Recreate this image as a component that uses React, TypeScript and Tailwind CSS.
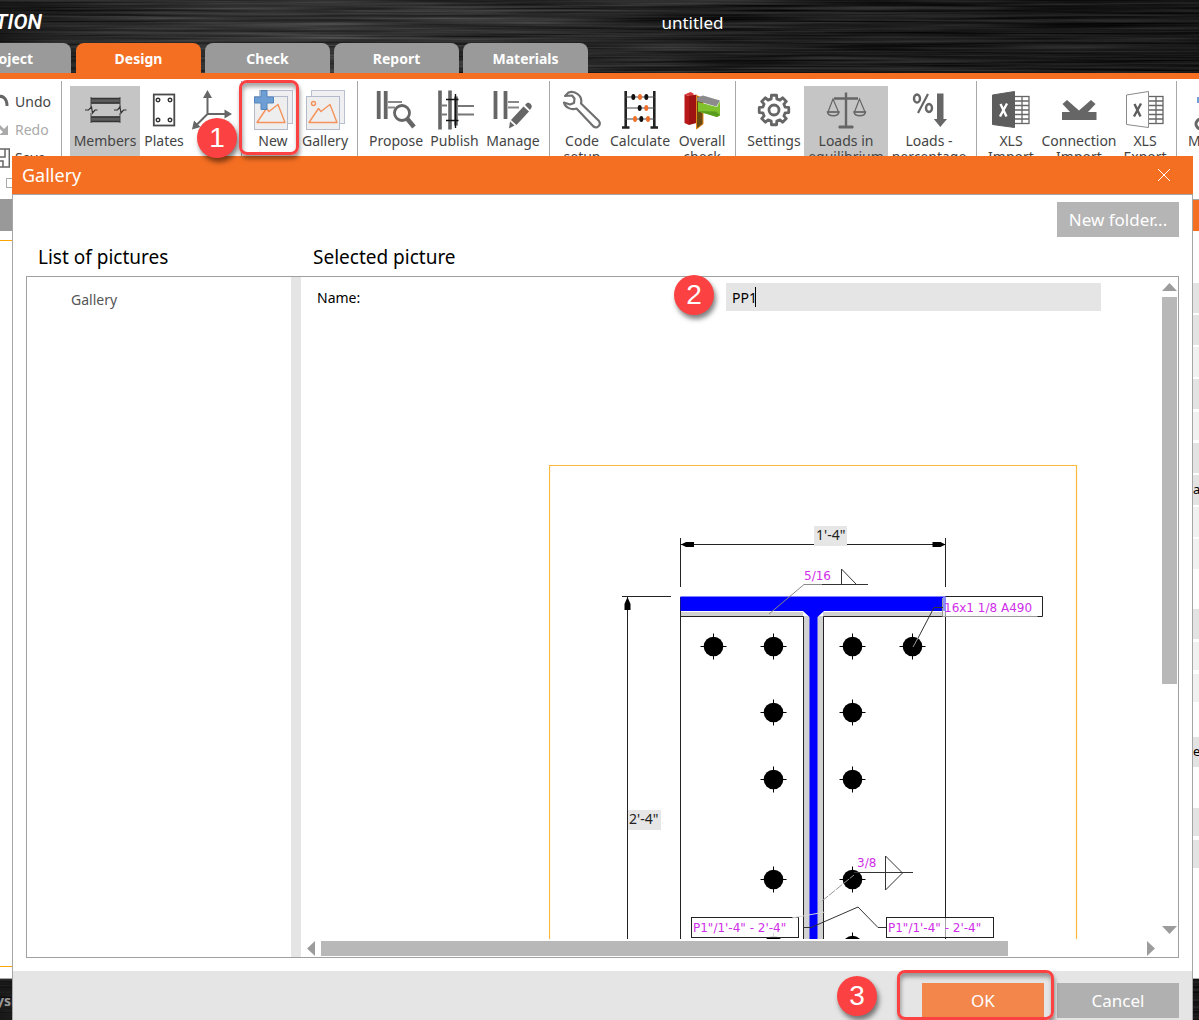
import React from "react";

const INK = "#666666";

function BrushedMetal({ id }: { id: string }) {
  return (
    <svg className="absolute inset-0 h-full w-full" aria-hidden="true">
      <defs>
        <filter id={id} x="0" y="0" width="100%" height="100%" colorInterpolationFilters="sRGB">
          <feTurbulence type="fractalNoise" baseFrequency="0.005 0.4" numOctaves="3" seed="4" />
          <feColorMatrix values="0.34 0 0 0 -0.04  0.34 0 0 0 -0.04  0.34 0 0 0 -0.04  0 0 0 0 1" />
        </filter>
        <linearGradient id={id + "-shine"}>
          <stop offset="0" stopColor="#000" stopOpacity="0.25" />
          <stop offset="0.33" stopColor="#fff" stopOpacity="0.07" />
          <stop offset="0.6" stopColor="#000" stopOpacity="0.1" />
          <stop offset="1" stopColor="#000" stopOpacity="0.3" />
        </linearGradient>
      </defs>
      <rect width="100%" height="100%" filter={`url(#${id})`} />
      <rect width="100%" height="100%" fill={`url(#${id}-shine)`} />
    </svg>
  );
}

function Icon({ x, children }: { x: number; children?: React.ReactNode }) {
  return (
    <svg className="h-11 w-11 shrink-0" viewBox={`${x} 86 44 44`} fill="none" aria-hidden="true">
      {children}
    </svg>
  );
}

const MembersIcon = () => (
  <Icon x={83}>
    <rect x="91" y="98" width="29" height="5.500" fill="#5c5c5c" />
    <rect x="91" y="116.500" width="29" height="5.500" fill="#5c5c5c" />
    <path d="M91 98.500h29M91 103h29M91 117h29M91 121.500h29" stroke="#333" strokeWidth="1.400" />
    <path d="M91 97v10M91 113v10M120 97v10M120 113v10" stroke="#444" />
    <path d="M85 110h3.500l3-3 1 6 2.500-3h2.500M114 110h3.500l2.500-3 1 6 2.500-3h3" stroke="#333" strokeWidth="1.200" />
  </Icon>
);

const PlatesIcon = () => (
  <Icon x={142}>
    <rect x="153.800" y="94.500" width="20.500" height="31" stroke="#4a4a4a" strokeWidth="1.800" />
    {[[158, 100], [170, 100], [158, 120], [170, 120]].map(([cx, cy]) => (
      <circle key={`${cx}-${cy}`} cx={cx} cy={cy} r="1.800" stroke="#333" strokeWidth="1.400" />
    ))}
  </Icon>
);

const AxesIcon = () => (
  <Icon x={190}>
    <path d="M207.500 96v18H227M207.500 114l-12 12" stroke={INK} strokeWidth="2" />
    <path d="M207.500 90l4.500 8h-9zM232 114l-7.500 4.500v-9zM192 129.500l2-9 6.500 6.500z" fill={INK} />
  </Icon>
);

const PictureIcon = ({ plus }: { plus?: boolean }) => (
  <Icon x={251}>
    <rect x="259.500" y="90.500" width="33" height="33" fill="#f0f0f2" stroke="#b9c0d0" />
    <rect x="254.500" y="96.500" width="33" height="33" fill="#eeeeef" stroke="#b3bacb" />
    <path d="M257 122.500l9.500-14 2.500 3 9-7 7 18z" stroke="#f5925a" strokeWidth="1.400" strokeLinejoin="round" />
    {plus ? (
      <path d="M261 90.500h6v6.500h6.500v6H267v6.500h-6V103h-6.500v-6h6.500z" fill="#6d9fd4" stroke="#5585bd" />
    ) : (
      <circle cx="261.500" cy="103.500" r="2" stroke="#f5925a" strokeWidth="1.400" />
    )}
  </Icon>
);

const ProposeIcon = () => (
  <Icon x={374}>
    <path d="M378.700 91v28M385.700 91v28" stroke={INK} strokeWidth="3.800" />
    <path d="M388 102h14M388 107.500h7" stroke="#888" strokeWidth="2" />
    <circle cx="402" cy="113" r="7.500" stroke={INK} strokeWidth="2.800" />
    <path d="M407 118.500l7 8.500" stroke={INK} strokeWidth="4.500" />
  </Icon>
);

const PublishIcon = () => (
  <Icon x={433}>
    <path d="M440 90.500v39M450 90.500v39M456 96.500v29" stroke={INK} strokeWidth="3.600" />
    <path d="M458 106h16M458 114.500h16M442 105.500h5M442 114.500h5" stroke="#777" strokeWidth="2" />
    <path d="M446 99.500h12.500M446 120.500h12.500M455.500 94v34" stroke="#111" strokeWidth="1.400" />
  </Icon>
);

const ManageIcon = () => (
  <Icon x={491}>
    <path d="M495.500 91v28M505.500 91v28" stroke={INK} strokeWidth="3.800" />
    <path d="M508 102h11M508 107.500h11" stroke="#888" strokeWidth="2" />
    <path d="M525 105l2-2c2-1.500 6 2 4.500 4.500l-1.500 2.500zM523.500 106.500l5.500 5-12.500 13.500-5.500-5zM510 121.500l4.500 4-5.500 3z" fill={INK} />
  </Icon>
);

const WrenchIcon = () => (
  <Icon x={560}>
    <path
      d="M568.500 92.500C575 90 583 96 581 103.500L599 121c2.500 4-2 8-5.500 5.500L576.500 108.500c-5 2-11.500-1-12.500-6l6 2 4-1.500.500-4.500-2.500-3-7 .500z"
      fill="#fff"
      stroke="#707070"
      strokeWidth="2.200"
      strokeLinejoin="round"
    />
  </Icon>
);

const AbacusIcon = () => (
  <Icon x={618}>
    <path d="M625.700 91v36M654.300 91v36" stroke="#222" strokeWidth="2.600" />
    <path d="M622 127.500h7.500M650.500 127.500h7.500" stroke="#222" strokeWidth="2.400" />
    <path d="M625 97h30M625 108h30M625 119h30" stroke="#444" strokeWidth="1.200" />
    {[[633.300, 97, 0], [640, 97, 1], [646.300, 97, 0], [639.700, 108, 0], [646.300, 108, 1], [635, 119, 1], [641.300, 119, 0], [648, 119, 1]].map(([cx, cy, hot]) => (
      <ellipse key={`${cx}-${cy}`} cx={cx} cy={cy} rx="2" ry="3" fill={hot ? "#f0702a" : "#111"} />
    ))}
  </Icon>
);

const OverallIcon = () => (
  <Icon x={680}>
    <path d="M684.500 94.500l4.500 1.500v29l-4.500-2z" fill="#b81818" />
    <path d="M684.500 94.500l6-2.500 3 1.500v3.500l-4.500-1z" fill="#d83a3a" />
    <path d="M689 96l7.500-1.500V123l-7.500 2z" fill="#9e1212" />
    <path d="M696.500 95.500l6.500 3v25.500l-6.500 5z" fill="#6b4a12" stroke="#e28a1a" />
    <path d="M698 102l19 5 3-6v14.500l-3 1.500-19-5.500z" fill="#7fc22e" />
    <path d="M698 111l18 .500 4 3.500-3 2z" fill="#5a9c1c" />
    <path d="M697 97.500l6-2 17 5-3.500 6L697 101z" fill="#8b8b8b" />
  </Icon>
);

const gearOutline = Array.from({ length: 8 }, (_, tooth) =>
  [[-14, 11.5], [-10, 15], [10, 15], [14, 11.5]]
    .map(([offset, r]) => {
      const a = ((tooth * 45 + offset) * Math.PI) / 180;
      return `${(773 + r * Math.sin(a)).toFixed(2)},${(110 - r * Math.cos(a)).toFixed(2)}`;
    })
    .join(" "),
).join(" ");

const GearIcon = () => (
  <Icon x={751}>
    <polygon points={gearOutline} stroke={INK} strokeWidth="2.800" strokeLinejoin="round" />
    <circle cx="773" cy="110" r="5" stroke={INK} strokeWidth="2.800" />
  </Icon>
);

const ScalesIcon = () => (
  <Icon x={824}>
    <path d="M846 92.500V126M834 98.500h24" stroke={INK} strokeWidth="2.400" />
    <path d="M839 128v-2h14v2z" fill={INK} stroke={INK} />
    <path d="M833 99l-5 13h10.500zM859.500 99l-5 13H865z" stroke={INK} strokeWidth="1.200" />
    <path d="M827.500 112h11.500c-1 5-10.500 5-11.500 0zM854 112h11.500c-1 5-10.500 5-11.500 0z" stroke={INK} strokeWidth="1.400" />
  </Icon>
);

const PercentIcon = () => (
  <Icon x={907}>
    <ellipse cx="917" cy="98.500" rx="3" ry="4" stroke={INK} strokeWidth="2.400" />
    <ellipse cx="929" cy="108" rx="3" ry="4" stroke={INK} strokeWidth="2.400" />
    <path d="M928 94l-10 19" stroke={INK} strokeWidth="2.200" />
    <path d="M937 93.500h6.500V119h3.500L940.300 127l-6.500-8h3.200z" fill={INK} />
  </Icon>
);

const SheetIcon = ({ solid }: { solid?: boolean }) => (
  <Icon x={988}>
    <rect x="1013" y="96.500" width="15" height="27" fill="#fff" stroke={INK} strokeWidth="1.300" />
    <path d="M1013 101h15M1013 105.500h15M1013 110h15M1013 114.500h15M1013 119h15M1021 96v27.500" stroke={INK} strokeWidth="1.300" />
    <path d="M991.500 95l22-3.500v36l-22-3z" fill={solid ? "#5d5d5d" : "#fff"} stroke={solid ? "#5d5d5d" : "#8a8a8a"} />
    <path d="M999.500 104l6 12.500M1006 103.500l-7 13" stroke={solid ? "#fff" : "#5d5d5d"} strokeWidth="2.400" />
  </Icon>
);

const ConnectionIcon = () => (
  <Icon x={1057}>
    <path d="M1062 112h8l-7.500-8 4.500-4 12 10.500L1091 100l4.500 4-7.500 8h8.500v8h-34.500z" fill={INK} />
  </Icon>
);

const MemberAddIcon = () => (
  <Icon x={1194}>
    <path d="M1197 97h10v6h-10z" fill="#6d9fd4" />
    <path d="M1204 120a5 5 0 100 8" stroke={INK} strokeWidth="3" />
  </Icon>
);

function Tool({ icon, label, name, className, children }: { icon: React.ReactNode; label?: string; name?: string; className: string; children?: React.ReactNode }) {
  return (
    <div className={`relative shrink-0 ${className}`}>
      <button type="button" aria-label={name} className="flex h-full w-full flex-col items-center">
        {icon}
        {label && <span className="mt-[3px] block text-center text-sm leading-4 text-[#444]">{label}</span>}
      </button>
      {children}
    </div>
  );
}

function Group({ children, className }: { children: React.ReactNode; className: string }) {
  return <div className={`flex shrink-0 border-r border-[#a8a8a8] pt-[5px] ${className}`}>{children}</div>;
}

function Badge({ n, className }: { n: number; className: string }) {
  return (
    <span
      className={`absolute z-20 flex size-10 items-center justify-center rounded-full bg-[#fc4142] font-['Liberation_Sans'] text-[28px] leading-none text-white shadow-[2px_4px_5px_rgba(0,0,0,0.5)] ${className}`}
    >
      {n}
    </span>
  );
}

const frame =
  "pointer-events-none absolute z-20 rounded-lg border-[3px] border-[#fc4142] shadow-[1px_4px_4px_rgba(0,0,0,0.4),inset_1px_4px_4px_rgba(0,0,0,0.35)]";

const tabs = ["Project", "Design", "Check", "Report", "Materials"];

const propertyRows = [
  "mt-[52px] h-[30px] bg-[#e3e3e3]",
  "mt-0.5 h-[30px] bg-[#e3e3e3]",
  "mt-0.5 h-[30px] bg-[#f1f1f1]",
  "mt-0.5 h-[30px] bg-[#e3e3e3]",
  "mt-[3px] h-7 bg-[#f1f1f1]",
  "mt-[3px] h-[30px] bg-[#e3e3e3]",
  "mt-0.5 h-[30px] bg-[#e3e3e3]",
  "mt-0.5 h-[30px] bg-[#f1f1f1]",
  "mt-0.5 h-[30px] bg-[#f1f1f1]",
  "mt-10 h-[30px] bg-[#e3e3e3]",
  "mt-[3px] h-7 bg-[#f1f1f1]",
  "mt-1 h-7 bg-[#f1f1f1]",
  "mt-[35px] h-[30px] bg-[#e3e3e3]",
  "mt-[41px] h-7 bg-[#e3e3e3]",
  "mt-1 h-7 bg-[#e3e3e3]",
];
const rowText: Record<number, string> = { 6: "a", 12: "ea" };

function Bolt({ x, y }: { x: number; y: number }) {
  return (
    <g>
      <circle cx={x} cy={y} r="9.800" fill="#000" />
      <path d={`M${x - 13} ${y}h26M${x} ${y - 13}v26`} stroke="#000" />
    </g>
  );
}

const bolts = [[713.500, 646.500], [773.500, 646.500], [852.500, 646.500], [912.500, 646.500], [773.500, 712.500], [852.500, 712.500], [773.500, 779.500], [852.500, 779.500], [773.500, 879.500], [852.500, 879.500], [773.500, 945.500], [852.500, 945.500]];

function PlateDrawing() {
  return (
    <svg className="h-[474px] w-[529px] shrink-0" viewBox="549 465 529 474" fill="none" fontFamily="'DejaVu Sans', sans-serif" fontSize="12" role="img" aria-label="Plate drawing">
      <path d="M549.500 940V465.500h527V940" stroke="#fdb93e" strokeWidth="1.200" />
      <path d="M681 612h122v5H681zM823 612h122v5H823zM803 616h7v324h-7zM817 616h7v324h-7z" fill="#d2d2d2" />
      <path d="M680.500 597v343M945.500 597v343M680 616.500h123.500V940M946 616.500H823.500V940" stroke="#222" />
      <path d="M680.500 596.500H946v14.500H824l-6.500 6v323h-8V617l-6.500-6H680.500z" fill="#0000ff" />
      <path d="M680.500 538v49M945.500 538v49M681 544.500h264M622 596.500h49M627.500 597v343" stroke="#222" />
      <path d="M681 544.500l5-2.500h8v5h-8zM945.500 544.500l-5-2.500h-8v5h8zM627.500 597l-3 7v6h6v-6z" fill="#000" />
      {bolts.map(([x, y]) => (
        <Bolt key={`${x}-${y}`} x={x} y={y} />
      ))}
      <rect x="814" y="526" width="33" height="20" fill="#e6e6e6" />
      <text x="816" y="540" fill="#222" fontSize="14" fontFamily="'Noto Sans', sans-serif">1'-4"</text>
      <rect x="628" y="810" width="33" height="20" fill="#e6e6e6" />
      <text x="629" y="824" fill="#222" fontSize="14" fontFamily="'Noto Sans', sans-serif">2'-4"</text>

      <path d="M769 614l35-29.500h26" stroke="#888" />
      <path d="M822 584.500h46M841.500 584.500V569l15 15.500" stroke="#333" />
      <text x="804" y="580" fill="#cf2ee8">5/16</text>

      <rect x="943" y="597" width="100" height="20" fill="#fff" fillOpacity="0.550" />
      <path d="M945.500 596.500h97v20h-6" stroke="#222" />
      <path d="M942.500 598v18.500h95" stroke="#999" />
      <path d="M943 607.500h-9L917 640" stroke="#333" />
      <path d="M918 638l-5 9" stroke="#999" />
      <text x="944" y="612" fill="#cf2ee8">16x1 1/8 A490</text>

      <path d="M822 901l32-26" stroke="#999" strokeDasharray="8 1" />
      <path d="M854 872.500h59M885.500 856v34l17-17z" stroke="#333" />
      <text x="857" y="867" fill="#cf2ee8">3/8</text>

      <rect x="691.500" y="917.500" width="107" height="20" fill="#fff" fillOpacity="0.850" stroke="#222" />
      <rect x="886.500" y="917.500" width="107" height="20" fill="#fff" fillOpacity="0.600" stroke="#222" />
      <path d="M803 927.500h8l47-20.500 20 20.500h8" stroke="#333" />
      <path d="M792 918l33-6" stroke="#d8d8d8" />
      <text x="693" y="932" fill="#cf2ee8">P1"/1'-4" - 2'-4"</text>
      <text x="888" y="932" fill="#cf2ee8">P1"/1'-4" - 2'-4"</text>
    </svg>
  );
}

function GalleryDialog() {
  return (
    <section role="dialog" aria-label="Gallery" className="absolute bottom-0 left-3 right-1.5 top-[156px] z-10 flex flex-col bg-white">
      <header className="flex h-[38px] shrink-0 items-center justify-between bg-[#f56f23] pl-2.5 pr-[22px] text-white">
        <h1 className="text-lg">Gallery</h1>
        <button type="button" aria-label="Close">
          <svg width="14" height="14" viewBox="0 0 14 14" stroke="#fff" aria-hidden="true">
            <path d="M1 1l12 12M13 1L1 13" />
          </svg>
        </button>
      </header>
      <div className="flex min-h-0 flex-1 flex-col border-x border-t border-[#a6a6a6]">
        <div className="flex justify-end px-[13px] pt-[7px]">
          <button type="button" className="h-[35px] w-[122px] bg-[#b5b5b5] text-[17px] text-white">
            New folder...
          </button>
        </div>
        <div className="grid h-[39px] grid-cols-[275px_1fr] items-center px-[13px] pt-0.5 text-[19px] text-black">
          <h2 className="pl-3">List of pictures</h2>
          <h2 className="pl-3">Selected picture</h2>
        </div>
        <div className="mx-[13px] flex min-h-0 flex-1 border border-[#a0a0a0]">
          <nav className="w-[264px] shrink-0 pl-11 pt-2.5">
            <button type="button" className="text-sm leading-[22px] text-[#555]">Gallery</button>
          </nav>
          <div className="w-2.5 shrink-0 bg-[#e5e5e5]" />
          <div className="flex min-w-0 flex-1 flex-col">
            <div className="flex min-h-0 flex-1">
              <div className="flex min-w-0 flex-1 flex-col pt-1.5">
                <div className="grid shrink-0 grid-cols-[425fr_375fr] items-center pr-[61px]">
                  <label htmlFor="picture-name" className="pl-4 pt-0.5 text-sm text-black">Name:</label>
                  <div className="relative flex h-7 items-center bg-[#e5e5e5] pl-1.5">
                    <input id="picture-name" defaultValue="PP1" className="w-[23px] bg-transparent pt-0.5 text-sm text-black outline-none" />
                    <span className="h-5 w-px bg-black" />
                    <Badge n={2} className="-left-[52px] -top-2" />
                  </div>
                </div>
                <div className="mt-[154px] flex min-h-0 flex-1 overflow-hidden pl-[248px]">
                  <PlateDrawing />
                </div>
              </div>
              <div className="mr-px flex w-[15px] shrink-0 flex-col items-center pt-1.5">
                <svg width="15" height="8" aria-hidden="true"><path d="M0 8L7.500 0 15 8z" fill="#9c9c9c" /></svg>
                <div className="mt-1.5 h-[387px] w-full shrink-0 bg-[#b8b8b8]" />
                <svg className="mt-auto mb-[5px]" width="15" height="8" aria-hidden="true"><path d="M0 0h15L7.500 8z" fill="#9c9c9c" /></svg>
              </div>
            </div>
            <div className="mb-px mt-0.5 flex h-[15px] shrink-0 items-center pl-1.5 pr-[23px]">
              <svg width="8" height="15" aria-hidden="true"><path d="M8 0v15L0 7.500z" fill="#9c9c9c" /></svg>
              <div className="ml-1.5 mr-[139px] h-full flex-1 bg-[#b8b8b8]" />
              <svg width="8" height="15" aria-hidden="true"><path d="M0 0v15l8-7.500z" fill="#9c9c9c" /></svg>
            </div>
          </div>
        </div>
        <footer className="mt-[13px] flex h-[49px] shrink-0 justify-end gap-[13px] bg-[#e5e5e5] pr-[13px] pt-3 text-[17px] text-white">
          <div className="relative">
            <button type="button" className="h-[35px] w-[122px] bg-[#f3864b]">OK</button>
            <span className={`${frame} -left-[25px] -top-[13px] h-[50px] w-[157px]`} />
            <Badge n={3} className="-left-[85px] -top-[7px]" />
          </div>
          <button type="button" className="h-[35px] w-[122px] bg-[#b0b0b0]">Cancel</button>
        </footer>
      </div>
    </section>
  );
}

export default function App() {
  return (
    <div className="relative flex h-screen flex-col overflow-hidden bg-white font-['Noto_Sans',sans-serif]">
      <header className="relative h-[73px] shrink-0 bg-[#1e1e1e]">
        <BrushedMetal id="metal-top" />
        <div className="relative grid h-[43px] grid-cols-[1fr_auto_1fr] items-center pt-0.5 text-white">
          <span className="-ml-[5px] font-['Roboto'] text-[21px] font-semibold italic">TION</span>
          <span className="ml-[186px] text-[17px]">untitled</span>
        </div>
        <nav className="relative -ml-[54px] flex gap-1">
          {tabs.map((tab) => (
            <button
              key={tab}
              type="button"
              className={`h-[30px] w-[125px] rounded-t-lg pt-0.5 text-sm font-bold text-white ${tab === "Design" ? "ml-px bg-[#f56f23]" : "bg-[#9a9a9a]"}`}
            >
              {tab}
            </button>
          ))}
        </nav>
      </header>
      <div className="h-1.5 shrink-0 bg-[#f56f23]" />

      <div className="flex h-[120px] shrink-0 pt-0.5">
        <div className="flex w-[62px] shrink-0 flex-col border-r border-[#a8a8a8] pt-[7px] text-sm text-[#444]">
          <button type="button" className="flex h-7 items-center gap-1.5">
            <svg width="9" height="16" viewBox="0 0 9 16" fill="none" aria-hidden="true"><path d="M-4 4c6-4 11 0 11 8" stroke="#666" strokeWidth="3" /></svg>
            Undo
          </button>
          <button type="button" className="flex h-7 items-center gap-1.5 text-[#aaa]">
            <svg width="9" height="16" viewBox="0 0 9 16" aria-hidden="true"><path d="M0 3l4 4 4-4v10H-1l4-3-4-4z" fill="#aaa" /></svg>
            Redo
          </button>
          <button type="button" className="flex h-7 items-center gap-[5px]">
            <svg width="10" height="20" viewBox="0 0 10 20" fill="none" aria-hidden="true"><path d="M-4 1h13.300v18H-4M5 1v8H-4M3 19v-6H-4" stroke="#666" strokeWidth="1.500" /></svg>
            Save
          </button>
          <input type="checkbox" aria-label="Detail" className="ml-1.5 mt-1.5 size-2.5 appearance-none border border-[#aaa]" />
        </div>
        <Group className="pl-2 pr-[5px]">
          <Tool icon={<MembersIcon />} label="Members" className="w-[70px] bg-[#c5c5c5]" />
          <Tool icon={<PlatesIcon />} label="Plates" className="w-12" />
          <Tool icon={<AxesIcon />} name="Axes" className="w-12">
            <Badge n={1} className="left-[9px] top-8" />
          </Tool>
        </Group>
        <Group className="pl-[5px] pr-1.5">
          <Tool icon={<PictureIcon plus />} label="New" className="w-[52px]">
            <span className={`${frame} -left-2 -top-1.5 h-[75px] w-[60px]`} />
          </Tool>
          <Tool icon={<PictureIcon />} label="Gallery" className="w-[52px]" />
        </Group>
        <Group className="pl-2 pr-1.5">
          <Tool icon={<ProposeIcon />} label="Propose" className="w-[60px]" />
          <Tool icon={<PublishIcon />} label="Publish" className="w-[57px]" />
          <Tool icon={<ManageIcon />} label="Manage" className="w-[60px]" />
        </Group>
        <Group className="pl-2 pr-[5px]">
          <Tool icon={<WrenchIcon />} label="Code setup" className="w-12" />
          <Tool icon={<AbacusIcon />} label="Calculate" className="w-[68px]" />
          <Tool icon={<OverallIcon />} label="Overall check" className="w-14" />
        </Group>
        <Group className="pl-2 pr-1.5">
          <Tool icon={<GearIcon />} label="Settings" className="w-[60px]" />
          <Tool icon={<ScalesIcon />} label="Loads in equilibrium" className="w-[84px] bg-[#c5c5c5]" />
          <Tool icon={<PercentIcon />} label="Loads - percentage" className="w-[82px]" />
        </Group>
        <Group className="pl-2 pr-[7px]">
          <Tool icon={<SheetIcon solid />} label="XLS Import" className="w-[52px]" />
          <Tool icon={<ConnectionIcon />} label="Connection Import" className="w-[84px]" />
          <Tool icon={<SheetIcon />} label="XLS Export" className="w-12" />
        </Group>
        <Group className="pl-2 pr-2">
          <Tool icon={<MemberAddIcon />} label="Member" className="w-[62px]" />
        </Group>
      </div>

      <div className="flex min-h-0 flex-1 border-b border-[#a8a8a8]">
        <main className="flex flex-1 flex-col">
          <div className="h-8 bg-[#999]" />
          <div className="mb-[11px] mt-[9px] flex-1 border-y border-[#fba500]" />
        </main>
        <aside className="w-1.5 shrink-0 overflow-hidden text-[13px] text-black">
          <div className="h-8 border-t border-[#a8a8a8] bg-[#f56f23]" />
          {propertyRows.map((row, i) => (
            <div key={i} className={`flex items-center ${row}`}>{rowText[i]}</div>
          ))}
        </aside>
      </div>
      <footer className="relative h-[41px] shrink-0 overflow-hidden bg-[#151515]">
        <BrushedMetal id="metal-bottom" />
        <span className="relative -ml-1 block pt-3 text-sm font-bold text-[#999]">ysis</span>
      </footer>

      <GalleryDialog />
    </div>
  );
}
